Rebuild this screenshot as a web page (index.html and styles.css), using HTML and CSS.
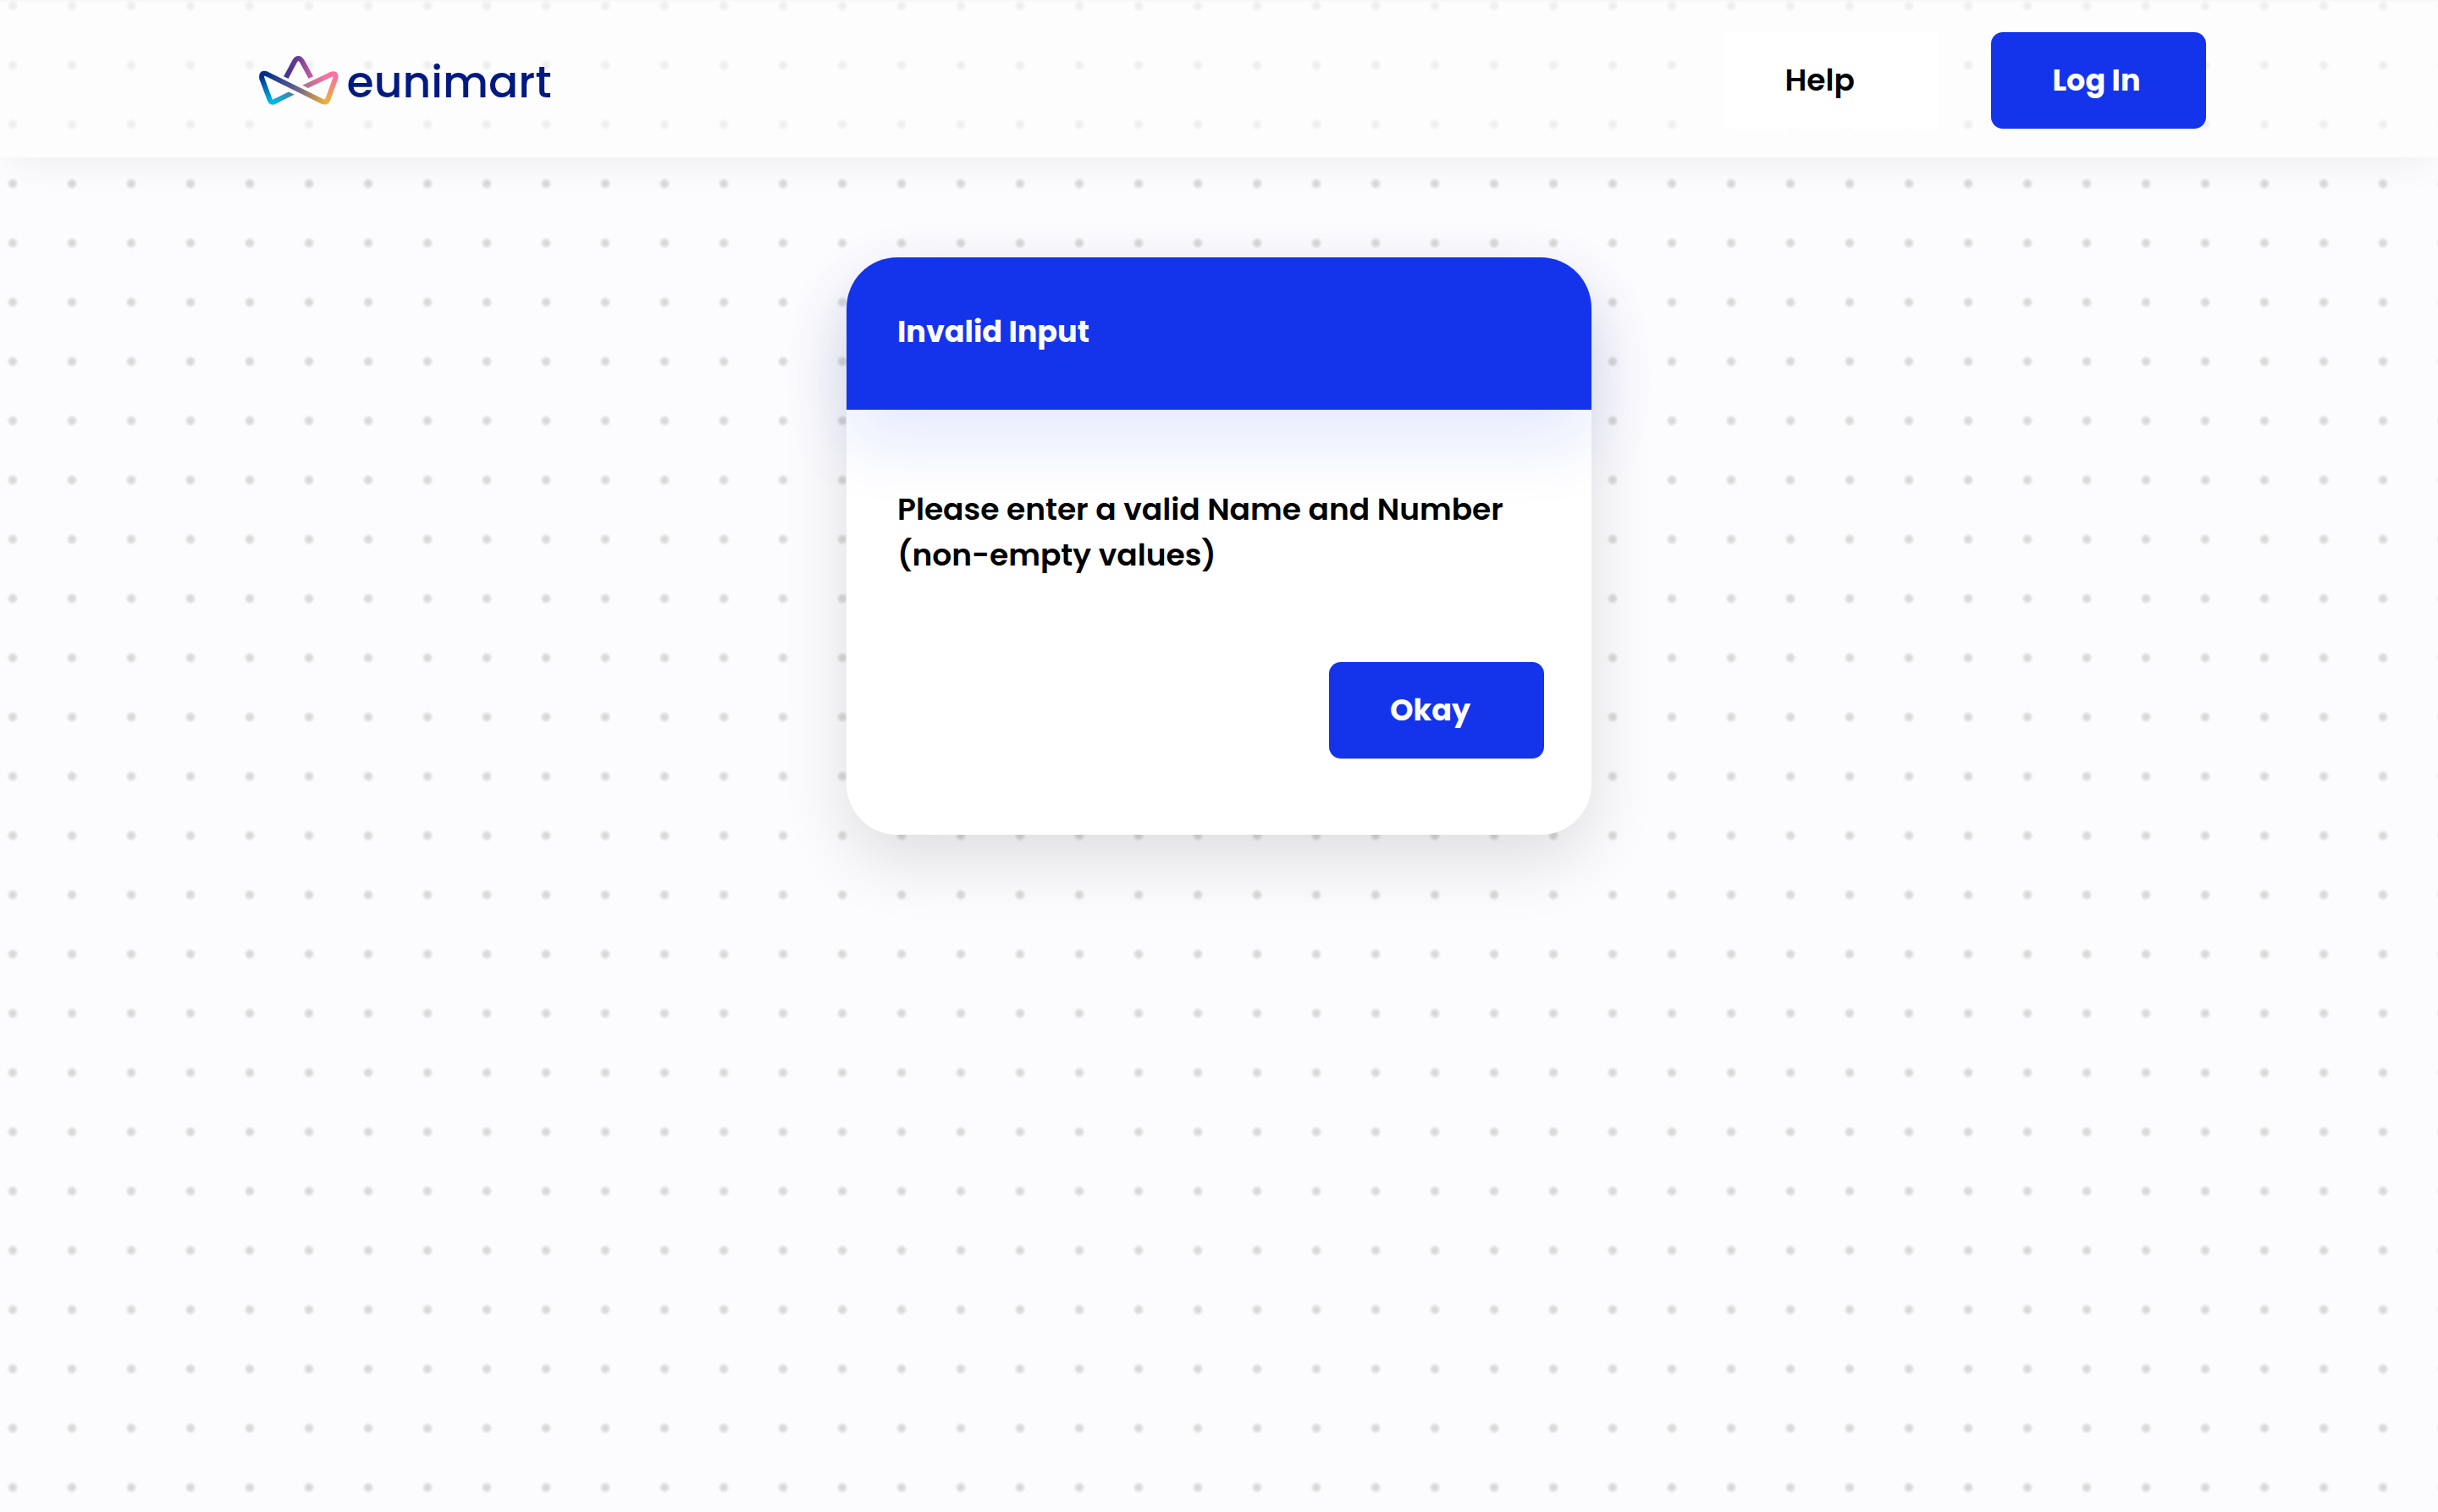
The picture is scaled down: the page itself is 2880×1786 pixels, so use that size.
FILE: index.html
```html
<!DOCTYPE html>
<html lang="en">
<head>
<meta charset="utf-8">
<meta name="viewport" content="width=device-width, initial-scale=1">
<title>eunimart</title>
<link rel="stylesheet" href="styles.css">
</head>
<body>
<header class="topbar">
  <a class="brand" href="#">
    <svg class="brand-mark" viewBox="30 30 288 180" fill="none" stroke-width="18" aria-hidden="true">
      <defs>
        <linearGradient id="left" gradientUnits="userSpaceOnUse" x1="50" y1="105" x2="75" y2="195">
          <stop offset="0" stop-color="#00308f"/><stop offset="1" stop-color="#00b8e4"/>
        </linearGradient>
        <linearGradient id="tail" gradientUnits="userSpaceOnUse" x1="80" y1="198" x2="155" y2="165">
          <stop offset="0" stop-color="#00b8e4"/><stop offset="1" stop-color="#477da6"/>
        </linearGradient>
        <linearGradient id="band" gradientUnits="userSpaceOnUse" x1="60" y1="95" x2="270" y2="195">
          <stop offset="0" stop-color="#00308f"/><stop offset=".5" stop-color="#65608c"/><stop offset="1" stop-color="#f0ae3a"/>
        </linearGradient>
        <linearGradient id="right" gradientUnits="userSpaceOnUse" x1="275" y1="190" x2="302" y2="108">
          <stop offset="0" stop-color="#f0ae3a"/><stop offset="1" stop-color="#fb70a0"/>
        </linearGradient>
        <linearGradient id="arm" gradientUnits="userSpaceOnUse" x1="195" y1="142" x2="270" y2="105">
          <stop offset="0" stop-color="#a8738e"/><stop offset="1" stop-color="#fb70a0"/>
        </linearGradient>
        <linearGradient id="peak" gradientUnits="userSpaceOnUse" x1="135" y1="70" x2="215" y2="90">
          <stop offset="0" stop-color="#40318f"/><stop offset="1" stop-color="#c0559f"/>
        </linearGradient>
        <mask id="gap" maskUnits="userSpaceOnUse" x="0" y="0" width="340" height="240">
          <rect width="340" height="240" fill="#fff"/>
          <path d="M100 119L240 186" stroke="#000" stroke-width="42"/>
        </mask>
        <mask id="peak-gap" maskUnits="userSpaceOnUse" x="0" y="0" width="340" height="240">
          <rect width="340" height="240" fill="#fff"/>
          <path d="M80 110L258 195M287 99L160 160" stroke="#000" stroke-width="42"/>
        </mask>
      </defs>
      <path d="M98 190L88 195Q76 201 71 188L43 113" stroke="url(#left)"/>
      <path d="M90 194L175 152" stroke="url(#tail)" mask="url(#gap)"/>
      <path d="M44 116L43 113Q38 89 62 98L258 195Q272 200 277 187" stroke="url(#band)"/>
      <path d="M276 190L304 112Q308 90 287 99L282 101" stroke="url(#right)"/>
      <path d="M285 100L170 155" stroke="url(#arm)" mask="url(#gap)"/>
      <path d="M120 126L160 51Q172 33 185 51L226 126" stroke="url(#peak)" mask="url(#peak-gap)"/>
    </svg>
    <span class="brand-name">eunimart</span>
  </a>
  <nav class="actions">
    <button class="btn btn-plain" type="button">Help</button>
    <button class="btn" type="button">Log In</button>
  </nav>
</header>
<main class="page">
  <section class="dialog" role="alertdialog" aria-labelledby="dialog-title" aria-describedby="dialog-text">
    <div class="dialog-head">
      <h2 class="dialog-title" id="dialog-title">Invalid Input</h2>
    </div>
    <div class="dialog-body">
      <p class="dialog-text" id="dialog-text">Please enter a valid Name and Number (non-empty values)</p>
      <div class="dialog-actions">
        <button class="btn" type="button">Okay</button>
      </div>
    </div>
  </section>
</main>
</body>
</html>
```
FILE: styles.css
```css
* {
  box-sizing: border-box;
}

body {
  margin: 0;
  min-height: 100vh;
  background-color: #fcfcff;
  background-image: radial-gradient(circle at 15px 35px, #d6d6d6 0, #dcdcdc 3px, rgba(220, 220, 220, 0) 7px);
  background-size: 70px 70px;
  background-position: 0 42px;
  color: #000;
  font-family: Poppins, Inter, sans-serif;
  font-size: 36px;
  line-height: 54px;
}

.topbar {
  position: relative;
  display: flex;
  align-items: center;
  justify-content: space-between;
  height: 186px;
  padding: 2px 9.5% 0;
  border-top: 2px solid rgba(0, 0, 0, 0.02);
  background: rgba(254, 254, 254, 0.6);
  box-shadow: 0 20px 40px -10px rgba(0, 0, 0, 0.05);
}

.brand {
  display: flex;
  align-items: center;
  gap: 9px;
  padding-left: 31px;
  color: #001a80;
  text-decoration: none;
}

.brand-mark {
  width: 96px;
  height: 60px;
}

.brand-name {
  padding-top: 4px;
  font-size: 52px;
  font-weight: 500;
  line-height: 60px;
}

.actions {
  display: flex;
  gap: 62px;
}

.btn {
  width: 254px;
  height: 114px;
  padding: 0 0 2px 72px;
  border: 0;
  border-radius: 14px;
  background: #1434eb;
  color: #fcfcff;
  font-family: inherit;
  font-size: 35px;
  font-weight: 700;
  text-align: left;
  cursor: pointer;
}

.btn-plain {
  border-radius: 0;
  background: #fff;
  color: #000;
  font-size: 36px;
  font-weight: 600;
}

.page {
  display: flex;
  justify-content: center;
  padding: 118px 32px;
}

.dialog {
  width: 100%;
  max-width: 880px;
  border-radius: 60px;
  background: #fff;
  box-shadow: 0 30px 80px rgba(0, 0, 0, 0.12);
}

.dialog-head {
  padding: 61px 60px 65px;
  border-radius: 60px 60px 0 0;
  background: #1434eb;
  box-shadow: 0 40px 80px rgba(20, 52, 235, 0.11);
}

.dialog-title {
  margin: 0;
  color: #fcfcff;
  font-size: 35px;
  font-weight: 700;
}

.dialog-body {
  padding: 91px 56px 90px 60px;
}

.dialog-text {
  margin: 0;
  font-weight: 600;
}

.dialog-actions {
  display: flex;
  justify-content: flex-end;
  margin-top: 99px;
}
```
